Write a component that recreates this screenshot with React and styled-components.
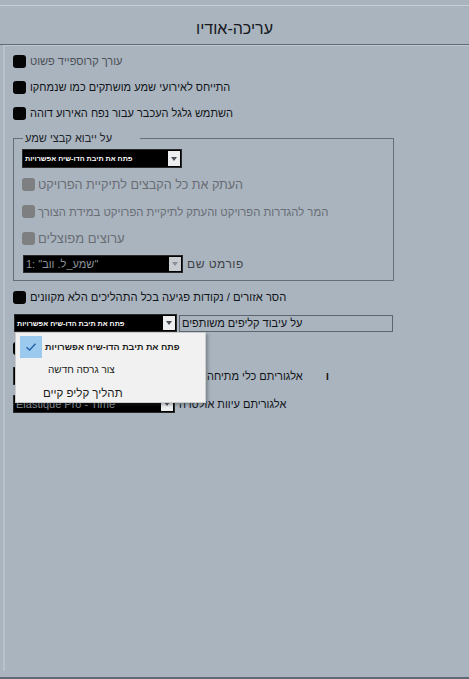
import React from 'react';
import styled, { createGlobalStyle } from 'styled-components';

const Global = createGlobalStyle`
  html, body {
    margin: 0;
    padding: 0;
    background: #aab4bf;
  }
  body {
    font-family: "Liberation Sans", "DejaVu Sans", sans-serif;
  }
`;

const App = () => {
  return (
    <>
      <Global />
      <Ventana>
        <Titulo>
          <span dir="rtl">עריכה-אודיו</span>
        </Titulo>
        <Panel>
          <Fila>
            <Caja />
            <Texto dir="rtl" $color="#4a4f55">עורך קרוספייד פשוט</Texto>
          </Fila>
          <Fila>
            <Caja />
            <Texto dir="rtl">התייחס לאירועי שמע מושתקים כמו שנמחקו</Texto>
          </Fila>
          <Fila>
            <Caja />
            <Texto dir="rtl">השתמש גלגל העכבר עבור נפח האירוע דוהה</Texto>
          </Fila>

          <Grupo>
            <Leyenda dir="rtl">על ייבוא קבצי שמע</Leyenda>
            <Desplegable $ancho={160} $margen={3}>
              <TextoDesplegable>
                <span dir="rtl">פתח את תיבת הדו-שיח אפשרויות</span>
              </TextoDesplegable>
              <Flecha />
            </Desplegable>
            <FilaGris>
              <Caja $gris />
              <Texto dir="rtl" $color="#686d73" $size={12.6}>העתק את כל הקבצים לתיקיית הפרויקט</Texto>
            </FilaGris>
            <FilaGris>
              <Caja $gris />
              <Texto dir="rtl" $color="#686d73" $size={11.3}>המר להגדרות הפרויקט והעתק לתיקיית הפרויקט במידת הצורך</Texto>
            </FilaGris>
            <FilaGris>
              <Caja $gris />
              <Texto dir="rtl" $color="#686d73" $size={13}>ערוצים מפוצלים</Texto>
            </FilaGris>
            <FilaFormato>
              <Desplegable $ancho={160} $alto={18}>
                <TextoDesplegable $gris>
                  <span>1: "שמע_ל. ווב"</span>
                </TextoDesplegable>
                <Flecha $gris />
              </Desplegable>
              <Texto dir="rtl" $color="#3d4248" $size={12} $espacio={0.5}>פורמט שם</Texto>
            </FilaFormato>
          </Grupo>

          <Fila $alto={28}>
            <Caja />
            <Texto dir="rtl" $size={11.2}>הסר אזורים / נקודות פגיעה בכל התהליכים הלא מקוונים</Texto>
          </Fila>

          <FilaCombo>
            <Ancla>
              <Desplegable $ancho={163} $alto={18}>
                <TextoDesplegable>
                  <span dir="rtl">פתח את תיבת הדו-שיח אפשרויות</span>
                </TextoDesplegable>
                <Flecha />
              </Desplegable>
              <Menu>
                <ItemMenu>
                  <Marca>
                    <svg width="12" height="10" viewBox="0 0 12 10">
                      <path d="M1.5 5.2 L4.6 8 L10.5 1.8" fill="none" stroke="#1d5fa8" strokeWidth="1.3" />
                    </svg>
                  </Marca>
                  <TextoMenu dir="rtl" $size={9} $peso={700}>פתח את תיבת הדו-שיח אפשרויות</TextoMenu>
                </ItemMenu>
                <ItemMenu>
                  <TextoMenu dir="rtl" $size={10} $sangria={28}>צור גרסה חדשה</TextoMenu>
                </ItemMenu>
                <ItemMenu>
                  <TextoMenu dir="rtl" $size={11.5} $sangria={23}>תהליך קליפ קיים</TextoMenu>
                </ItemMenu>
              </Menu>
            </Ancla>
            <Recuadro>
              <Texto dir="rtl" $size={11}>על עיבוד קליפים משותפים</Texto>
            </Recuadro>
          </FilaCombo>

          <FilaOculta $margen={2}>
            <Caja />
            <Texto dir="rtl" $size={12}>יון אוטומטי של כל אירועים חופפים</Texto>
          </FilaOculta>
          <FilaOculta>
            <Desplegable $ancho={190} $alto={18}>
              <TextoDesplegable />
              <Flecha />
            </Desplegable>
            <Texto dir="rtl" $size={11}>אלגוריתם כלי מתיחה</Texto>
            <Suelta>ו</Suelta>
          </FilaOculta>
          <FilaOculta>
            <Desplegable $ancho={162} $alto={18}>
              <TextoDesplegable $gris>
                <span>Elastique Pro - Time</span>
              </TextoDesplegable>
              <Flecha />
            </Desplegable>
            <Texto dir="rtl" $size={11}>אלגוריתם עיוות אולטרה</Texto>
          </FilaOculta>
        </Panel>
      </Ventana>
    </>
  );
};

const Ventana = styled.div`
  width: 469px;
  height: 679px;
  box-sizing: border-box;
  padding-top: 5px;
  display: flex;
  flex-direction: column;
  border-bottom: 2px solid #5e6876;
`;

const Titulo = styled.div`
  height: 31px;
  padding-top: 7px;
  border-top: 1px solid #c6ced6;
  border-bottom: 1px solid #5f6977;
  display: flex;
  align-items: center;
  justify-content: center;
  font-size: 16px;
  color: #15181c;
  flex: none;
`;

const Panel = styled.div`
  flex: 1;
  margin-left: 3px;
  border-left: 2px solid #b9c2cb;
  border-top: 1px solid #c0c8d0;
  padding: 2px 0 0 8px;
  display: flex;
  flex-direction: column;
  align-items: flex-start;
  margin-bottom: 6px;
`;

const Fila = styled.div`
  display: flex;
  align-items: center;
  gap: 4px;
  height: ${p => p.$alto || 26}px;
  flex: none;
`;

const FilaGris = styled(Fila)`
  height: 27px;
  gap: 3px;
`;

const Caja = styled.span`
  width: 13px;
  height: 13px;
  border-radius: 3px;
  background: ${p => (p.$gris ? '#7e7f80' : '#050505')};
  flex: none;
`;

const Texto = styled.span`
  font-size: ${p => p.$size || 11}px;
  color: ${p => p.$color || '#111418'};
  letter-spacing: ${p => p.$espacio || 0}px;
  white-space: nowrap;
`;

const Grupo = styled.fieldset`
  margin: 6px 0 2px 0;
  width: 381px;
  box-sizing: border-box;
  border: 1px solid #656e79;
  border-radius: 0;
  padding: 5px 0 7px 8px;
  display: flex;
  flex-direction: column;
  align-items: flex-start;
  flex: none;
`;

const Leyenda = styled.legend`
  font-size: 11px;
  color: #202428;
  padding: 0 28px 0 2px;
  margin-left: 1px;
  line-height: 12px;
`;

const Desplegable = styled.div`
  width: ${p => p.$ancho}px;
  height: ${p => p.$alto || 19}px;
  background: #000;
  border: 1px solid #2a2a2a;
  box-sizing: border-box;
  display: flex;
  align-items: stretch;
  flex: none;
  margin-bottom: ${p => p.$margen || 0}px;
`;

const TextoDesplegable = styled.span`
  flex: 1;
  display: flex;
  align-items: center;
  padding-left: 2px;
  color: ${p => (p.$gris ? '#8d9399' : '#fff')};
  font-weight: ${p => (p.$gris ? 'normal' : 'bold')};
  font-size: ${p => (p.$gris ? '11px' : '7.2px')};
  white-space: nowrap;
  overflow: hidden;
`;

const Flecha = styled.span`
  width: 12px;
  margin: 1px;
  background: ${p => (p.$gris ? '#c9cdd1' : '#eceeef')};
  display: flex;
  align-items: center;
  justify-content: center;

  &::after {
    content: '';
    border-left: 3.5px solid transparent;
    border-right: 3.5px solid transparent;
    border-top: 4px solid ${p => (p.$gris ? '#8a9096' : '#4b5056')};
  }
`;

const FilaFormato = styled.div`
  display: flex;
  align-items: center;
  gap: 4px;
  margin-top: 3px;
  margin-left: 1px;
`;

const FilaCombo = styled.div`
  display: flex;
  align-items: center;
  gap: 2px;
  margin-top: 3px;
  margin-left: 1px;
  flex: none;
`;

const Ancla = styled.div`
  position: relative;
  z-index: 2;
  width: 163px;
  height: 18px;
`;

const Recuadro = styled.div`
  width: 214px;
  height: 17px;
  box-sizing: border-box;
  border: 1px solid #5d6670;
  display: flex;
  align-items: center;
  padding-left: 2px;
`;

const Menu = styled.div`
  position: absolute;
  top: 18px;
  left: 1px;
  width: 191px;
  height: 71px;
  box-sizing: border-box;
  overflow: hidden;
  background: #f1f1f1;
  border: 1px solid #cdcdcd;
  box-shadow: 2px 2px 3px rgba(40, 45, 55, 0.35);
  padding: 2px 0 0 4px;
  display: flex;
  flex-direction: column;
`;

const ItemMenu = styled.div`
  display: flex;
  align-items: center;
  justify-content: flex-start;
  gap: 3px;
  height: 23px;
  flex: none;
`;

const Marca = styled.span`
  width: 22px;
  height: 22px;
  background: #9ccaef;
  display: flex;
  align-items: center;
  justify-content: center;
  flex: none;
`;

const TextoMenu = styled.span`
  font-size: ${p => p.$size}px;
  font-weight: ${p => p.$peso || 400};
  letter-spacing: ${p => p.$espacio || 0}px;
  color: #1b1d20;
  margin-left: ${p => p.$sangria || 0}px;
  white-space: nowrap;
`;

const FilaOculta = styled.div`
  display: flex;
  align-items: center;
  gap: 4px;
  height: 28px;
  margin-top: ${p => p.$margen || 0}px;
  flex: none;
`;

const Suelta = styled.span`
  font-size: 11px;
  font-weight: bold;
  color: #111;
  margin-left: 19px;
`;

export default App;
